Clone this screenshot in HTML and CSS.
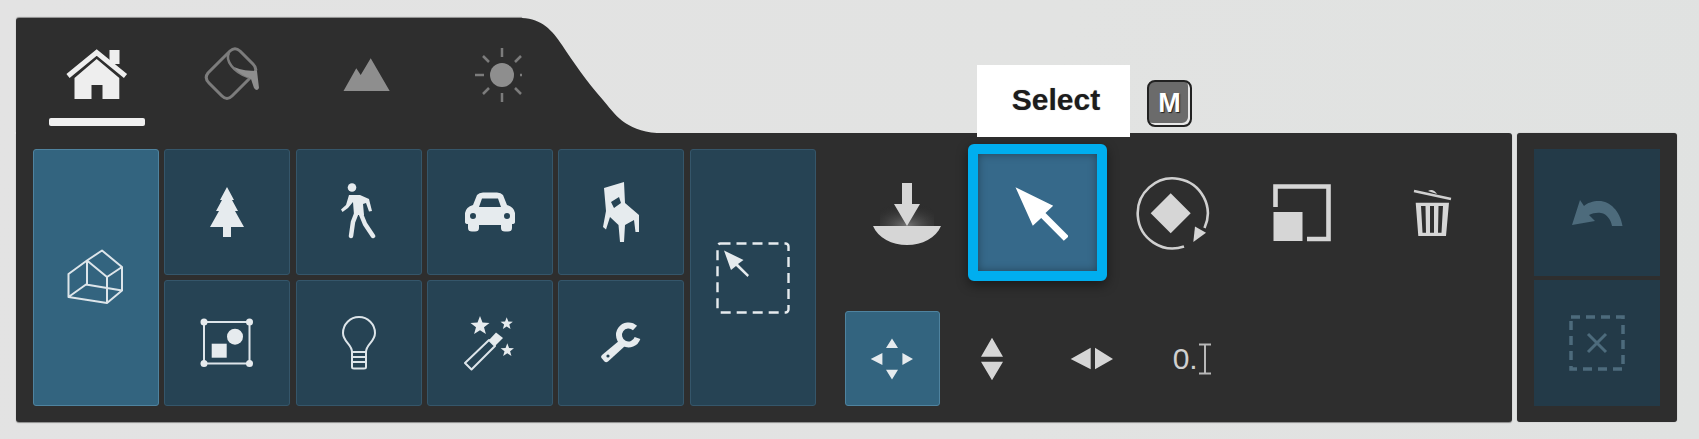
FILE: index.html
```html
<!DOCTYPE html>
<html lang="en">
<head>
    <meta charset="UTF-8">
    <title>Toolbar</title>
    <link rel="stylesheet" href="styles.css">
</head>
<body>
    <div class="toolbar">
        <div class="left-col">
            <!-- mode tabs -->
            <div class="head">
                <div class="tabs">
                    <div class="tab selected">
                        <div class="tab-icon">
                            <svg width="64" height="52" viewBox="0 0 64 52">
                                <path class="tab-on-line" d="M3 27 L31.7 3.5 L60.5 27"/>
                                <rect class="tab-on" x="44.5" y="1" width="10" height="14"/>
                                <path class="tab-on" d="M31.7 10 L54.3 29 V50 H37.5 V36 H26.5 V50 H9.5 V29 Z"/>
                            </svg>
                        </div>
                        <div class="underline"></div>
                    </div>
                    <div class="tab">
                        <div class="tab-icon">
                            <svg width="58" height="58" viewBox="0 0 58 58">
                                <path class="tab-off-line" d="M27 5 Q32 0.5 37 5 L50 18 Q55 23 51 28 L29 50 Q24 55 19 50 L6 37 Q1 32 5 27 Z"/>
                                <path class="tab-off-thin" d="M26 7 C22 14 30 26 45 31"/>
                                <path class="tab-off" d="M31 21 C38 24 46 25 54 25 L56 42 Q54 46 51 42 L48 33 C42 30 35 27 31 21 Z"/>
                            </svg>
                        </div>
                    </div>
                    <div class="tab">
                        <div class="tab-icon">
                            <svg width="48" height="34" viewBox="0 0 48 34">
                                <path class="tab-off" d="M0.5 33 L13.3 10.3 L17.7 17 L27.7 0.3 L46.7 33 Z"/>
                            </svg>
                        </div>
                    </div>
                    <div class="tab">
                        <div class="tab-icon">
                            <svg width="56" height="56" viewBox="0 0 56 56">
                                <circle class="tab-off" cx="28" cy="28" r="12"/>
                                <path class="tab-off-thin" d="M28 1 V10 M28 46 V55 M1 28 H10 M46 28 H55 M9 9 L15 15 M47 9 L41 15 M9 47 L15 41 M47 47 L41 41"/>
                            </svg>
                        </div>
                    </div>
                </div>
                <svg class="curve" width="150" height="115" viewBox="0 0 150 115">
                    <path d="M0 0 C20 1 30 12 40 27 C50 42 65 64 81 82 C92 95 103 113 135 115 H150 V116 H0 Z"/>
                </svg>
            </div>

            <div class="main">
                <!-- object categories -->
                <div class="tile-grid">
                    <div class="tile tall active">
                        <svg width="60" height="60" viewBox="0 0 60 60">
                            <path class="line" d="M36 2.5 L56 19 V42.5 L41 55 L2.5 49 V26 L21 12.5 Z M21 12.5 L41 29 L56 19 M41 29 V55 M21 12.5 V36.5 M2.5 49 L20 36.5 L56 42.5"/>
                        </svg>
                    </div>
                    <div class="tile">
                        <svg width="44" height="52" viewBox="-2 0 44 52">
                            <path class="solid" d="M20 1 L27 14 H25 L31 25 H28 L37 41 H24 V51 H16 V41 H3 L12 25 H9 L15 14 H13 Z"/>
                        </svg>
                    </div>
                    <div class="tile">
                        <svg width="40" height="60" viewBox="0 0 40 60">
                            <circle class="solid" cx="13" cy="5.5" r="4.3"/>
                            <path class="solid" d="M10 13 H21 L30 17 L33 29 L30 29.5 L27 21 L24 22 L25 33 L15 33 L14 20 L9 26 L3.5 30 L2 27.5 L7 23 Z"/>
                            <path class="line-w4" d="M17.5 31 L14 40 L12 54 M21.5 31 L26 42 L34 54"/>
                        </svg>
                    </div>
                    <div class="tile">
                        <svg width="56" height="42" viewBox="-2 0 56 42">
                            <path class="solid" fill-rule="evenodd" d="M13 4 Q15 1.5 19 1.5 H33 Q37 1.5 39 4 L43 14 Q50 16 51 22 V31 Q51 33 48 33 V37 Q48 40.5 44 40.5 H41 Q37 40.5 37 37 V34 H15 V37 Q15 40.5 11 40.5 H8 Q4 40.5 4 37 V33 Q1 33 1 31 V22 Q2 16 9 14 Z M18 7.5 H34 L37 16 H15 Z M9 22 A3 3 0 1 0 9 28 A3 3 0 1 0 9 22 Z M43 22 A3 3 0 1 0 43 28 A3 3 0 1 0 43 22 Z"/>
                        </svg>
                    </div>
                    <div class="tile">
                        <svg width="38" height="62" viewBox="0 0 38 62">
                            <path class="solid" fill-rule="evenodd" d="M2 7 L22 1 L23 22 L37 34 V51 H33.5 L32 39 L23 44 L22 61 H18 L16.5 44 L8 36 L4 48.5 L1 46 L4 30 Z M9 21 L17 16 L19 22 L12 27 Z"/>
                        </svg>
                    </div>
                    <div class="tile tall">
                        <svg width="74" height="72" viewBox="0 0 74 72">
                            <rect class="dashed" x="1.5" y="1.5" width="71" height="69" rx="3"/>
                            <path class="solid" d="M8 8.5 L27.5 18 L22 22 L33 33 L31.5 35 L20 24 L15 28 Z"/>
                        </svg>
                    </div>
                    <div class="tile">
                        <svg width="56" height="52" viewBox="0 0 56 52">
                            <rect class="line" x="5" y="5" width="45.5" height="41.5"/>
                            <circle class="solid" cx="5" cy="5" r="3.5"/>
                            <circle class="solid" cx="50.5" cy="5" r="3.5"/>
                            <circle class="solid" cx="5" cy="46.5" r="3.5"/>
                            <circle class="solid" cx="50.5" cy="46.5" r="3.5"/>
                            <circle class="solid" cx="36" cy="19.7" r="8"/>
                            <rect class="solid" x="12.7" y="26.7" width="15" height="14"/>
                        </svg>
                    </div>
                    <div class="tile">
                        <svg width="36" height="54" viewBox="0 0 36 54">
                            <path class="line" d="M11 36 C11 28 2 26 2 17 A16 16 0 0 1 34 17 C34 26 25 28 25 36 Z M11 36 V51 Q11 52.5 13 52.5 H23 Q25 52.5 25 51 V36 M11 41 H25 M11 46 H25"/>
                        </svg>
                    </div>
                    <div class="tile">
                        <svg width="54" height="56" viewBox="0 0 54 56">
                            <polygon class="solid" transform="translate(17 11) scale(10)" points="0,-1 .25,-.34 .95,-.31 .4,.13 .59,.81 0,.42 -.59,.81 -.4,.13 -.95,-.31 -.25,-.34"/>
                            <polygon class="solid" transform="translate(43.7 8.7) scale(6.5)" points="0,-1 .25,-.34 .95,-.31 .4,.13 .59,.81 0,.42 -.59,.81 -.4,.13 -.95,-.31 -.25,-.34"/>
                            <polygon class="solid" transform="translate(44.3 35.3) scale(7)" points="0,-1 .25,-.34 .95,-.31 .4,.13 .59,.81 0,.42 -.59,.81 -.4,.13 -.95,-.31 -.25,-.34"/>
                            <path class="line" d="M2 48 L26 25 L32 31 L8.5 54.5 Z"/>
                            <path class="solid" d="M26 25 L33 17.5 L40 23 L32 31 Z"/>
                        </svg>
                    </div>
                    <div class="tile">
                        <svg width="44" height="44" viewBox="0 0 44 44">
                            <path class="wrench-head" d="M36 7 A9.5 9.5 0 1 0 38.5 17"/>
                            <path class="solid" d="M21 19 L26 25 L9 40.5 Q7 42 5.5 40.5 L2.5 37 Q1.5 35.5 3 34 Z"/>
                            <circle class="hole" cx="9" cy="35" r="1.6"/>
                        </svg>
                    </div>
                </div>

                <!-- placement tools -->
                <div class="tools">
                    <div class="tool-row">
                        <div class="tool">
                            <svg width="70" height="68" viewBox="0 0 70 68">
                                <defs>
                                    <radialGradient id="dropGlow" cx="0.5" cy="1" r="0.75">
                                        <stop offset="0" stop-color="#777777"/>
                                        <stop offset="1" stop-color="#2e2e2e" stop-opacity="0"/>
                                    </radialGradient>
                                </defs>
                                <rect x="8" y="17" width="54" height="30" fill="url(#dropGlow)"/>
                                <path class="gray" d="M30 4 H40 V25 H48 L35 47 L22 25 H30 Z"/>
                                <path class="gray" d="M1 47 H69 C64 59 50 66 35 66 C20 66 6 59 1 47 Z"/>
                            </svg>
                        </div>
                        <div class="tool tool-select">
                            <svg width="60" height="60" viewBox="-4.5 -1 60 60">
                                <path class="white" d="M3 3.3 L40.7 21.7 L33 29 L56.3 52.3 L51.3 56.7 L28.7 34 L20.3 41.7 Z"/>
                            </svg>
                        </div>
                        <div class="tool">
                            <svg width="82" height="76" viewBox="-5 0 82 76">
                                <path class="gray-line" d="M51 71.5 A35 35 0 1 1 71.5 53"/>
                                <path class="gray" d="M62 51.5 L73 57.7 L60.3 67 Z"/>
                                <path class="gray" d="M37.7 18.3 L57.7 38.3 L37.7 58.3 L17.7 38.3 Z"/>
                            </svg>
                        </div>
                        <div class="tool">
                            <svg width="64" height="60" viewBox="-4 0 64 60">
                                <path class="gray-line-w5" d="M3.5 24 V3.5 H56.5 V56 H35"/>
                                <rect class="gray" x="1.5" y="29" width="29" height="29"/>
                            </svg>
                        </div>
                        <div class="tool">
                            <svg width="45" height="50" viewBox="-5 0 45 50">
                                <path class="gray-line" d="M1 3 L38 11"/>
                                <path class="gray" d="M15 3 Q20 0 24 6 Z"/>
                                <path class="gray" fill-rule="evenodd" d="M2.7 14.7 H36 L33 48 H5.3 Z M8 18 L9.5 44.7 H13 L12.5 18 Z M17 18 V44.7 H21 V18 Z M25.5 18 L25 44.7 H28.5 L30 18 Z"/>
                            </svg>
                        </div>
                    </div>
                    <div class="small-row">
                        <div class="small-tool active">
                            <svg width="44" height="44" viewBox="0 0 44 44">
                                <path class="solid" d="M22 1.4 L28 11 H16 Z M22 42.6 L16 32.7 H28 Z M0.7 22 L12.4 16 V28 Z M43 22 L32.4 16 V28 Z"/>
                            </svg>
                        </div>
                        <div class="small-tool">
                            <svg width="24" height="46" viewBox="0 0 24 46">
                                <path class="gray" d="M12 1.7 L23 20.7 H1 Z M1 25.7 H23 L12 44.3 Z"/>
                            </svg>
                        </div>
                        <div class="small-tool">
                            <svg width="46" height="24" viewBox="0 0 46 24">
                                <path class="gray" d="M1.7 12 L21.7 0.7 V22.3 Z M26 0.7 L44 12 L26 22.3 Z"/>
                            </svg>
                        </div>
                        <div class="small-tool">
                            <span class="num">0.</span>
                            <svg width="14" height="32" viewBox="0 0 14 32">
                                <path class="cursor" d="M1 1.5 H13 M7 1.5 V30.5 M1 30.5 H13"/>
                            </svg>
                        </div>
                    </div>
                </div>
            </div>
        </div>

        <!-- undo / deselect -->
        <div class="side">
            <div class="side-tile">
                <svg width="52" height="28" viewBox="0 0 52 28">
                    <path class="muted" d="M9 1 L1 26 L24 22 L18 16 C22 14 26 13.5 30 14 C36 15 40 21 41 27 H51.5 C49 12 39 2 28 2 C22 2 16 4 13 7 Z"/>
                </svg>
            </div>
            <div class="side-tile">
                <svg width="58" height="58" viewBox="0 0 58 58">
                    <rect class="muted-dash" x="3" y="3" width="52" height="52"/>
                    <path class="muted-x" d="M20 20 L38 38 M38 20 L20 38"/>
                </svg>
            </div>
        </div>

        <!-- tooltip over the panel -->
        <div class="hint">
            <div class="hint-label">Select</div>
            <div class="keycap">M</div>
        </div>
    </div>
</body>
</html>
```

FILE: styles.css
```css
body {
    margin: 0;
    height: 439px;
    overflow: hidden;
    background: linear-gradient(100deg, #e3e3e3, #e2e3e2 60%, #e0e2e1);
    font-family: "Liberation Sans", Arial, sans-serif;
}

.toolbar {
    position: relative;
    display: flex;
    align-items: flex-end;
    gap: 5px;
    width: 1699px;
    padding: 18px 0 0 16px;
    box-sizing: border-box;
}

.toolbar svg {
    filter: blur(0.5px);
}

.left-col {
    width: 1496px;
}

.head {
    display: flex;
    height: 115px;
}

.tabs {
    display: flex;
    flex: none;
    gap: 39px;
    width: 506px;
    padding: 27px 0 0 33px;
    box-sizing: border-box;
    background-color: #2e2e2e;
    border-radius: 3px 0 0 0;
    box-shadow: 0 -1px 1px #8a8a8a;
}

.tab {
    flex: none;
    width: 96px;
}

.tab-icon {
    display: flex;
    justify-content: center;
    align-items: center;
    height: 60px;
}

.underline {
    height: 8px;
    margin-top: 13px;
    background-color: #f0f0f0;
    border-radius: 2px;
}

.curve {
    display: block;
    flex: none;
    fill: #2e2e2e;
}

.main {
    display: flex;
    height: 289px;
    padding: 16px 0 0 17px;
    box-sizing: border-box;
    background-color: #2e2e2e;
    border-radius: 0 3px 3px 3px;
    box-shadow: 0 1px 1px #8a8a8a;
}

.tile-grid {
    display: grid;
    grid-template-columns: repeat(6, 126px);
    grid-template-rows: 126px 126px;
    column-gap: 5.33px;
    row-gap: 5px;
}

.tile {
    display: flex;
    justify-content: center;
    align-items: center;
    background-color: #264354;
    border: 1px solid #35566a;
    border-radius: 3px;
}

.tile.tall {
    grid-row: span 2;
}

.active {
    background-color: #33647f;
    border: 1px solid #4f839f;
    border-radius: 3px;
}

.tools {
    margin: -5px 0 0 25.5px;
}

.tool-row {
    display: grid;
    grid-template-columns: repeat(5, 131px);
    height: 137px;
}

.tool {
    display: flex;
    justify-content: center;
    align-items: center;
}

.tool-select {
    justify-self: center;
    width: 139px;
    box-sizing: border-box;
    background-color: #36698a;
    border: 10px solid #00aeef;
    border-radius: 6px;
    box-shadow: inset 0 0 8px rgba(0, 0, 0, 0.35), 0 4px 12px rgba(0, 0, 0, 0.45);
}

.small-row {
    display: flex;
    gap: 5px;
    margin: 30px 0 0 3.5px;
}

.small-tool {
    display: flex;
    justify-content: center;
    align-items: center;
    width: 95px;
    height: 95px;
    box-sizing: border-box;
}

.num {
    font-size: 30px;
    line-height: 32px;
    color: #d0d0d0;
}

.side {
    display: grid;
    grid-template-rows: 127px 126px;
    row-gap: 4px;
    width: 160px;
    height: 289px;
    padding: 16px 17px;
    box-sizing: border-box;
    background-color: #2e2e2e;
    border-radius: 3px;
    box-shadow: 0 0 1px #8a8a8a;
}

.side-tile {
    display: flex;
    justify-content: center;
    align-items: center;
    background-color: #233a48;
}

/* tooltip */
.hint {
    position: absolute;
    top: 65px;
    left: 977px;
    display: flex;
    align-items: flex-start;
}

.hint-label {
    width: 153px;
    height: 72px;
    padding-left: 5px;
    box-sizing: border-box;
    line-height: 70px;
    text-align: center;
    font-size: 30px;
    font-weight: bold;
    color: #1c1c1c;
    text-shadow: 0 0 1px rgba(0, 0, 0, 0.4);
    background-color: #fff;
}

.keycap {
    display: flex;
    justify-content: center;
    align-items: center;
    width: 45px;
    height: 47px;
    margin: 15px 0 0 17px;
    box-sizing: border-box;
    font-size: 27px;
    font-weight: bold;
    color: #fff;
    text-shadow: 1px 1px 1px #222;
    background-color: #6b6b6b;
    border: 2px solid #222;
    border-radius: 8px;
    box-shadow: inset -2px -2px 0 #e8e8e8;
}

/* svg paints */
.tab-on { fill: #eeeeee; }
.tab-on-line { fill: none; stroke: #eeeeee; stroke-width: 5; }
.tab-off { fill: #8e8e8e; }
.tab-off-line { fill: none; stroke: #7c7c7c; stroke-width: 3; }
.tab-off-thin { fill: none; stroke: #7c7c7c; stroke-width: 2.5; }

.solid { fill: #e6ebee; }
.hole { fill: #264354; }
.line { fill: none; stroke: #dde5ea; stroke-width: 2; stroke-linejoin: round; }
.line-w4 { fill: none; stroke: #e6ebee; stroke-width: 4.5; stroke-linecap: round; stroke-linejoin: round; }
.dashed { fill: none; stroke: #e6ebee; stroke-width: 2.4; stroke-dasharray: 10 6; }
.wrench-head { fill: none; stroke: #e6ebee; stroke-width: 6; }

.white { fill: #ffffff; }
.gray { fill: #d6d6d6; }
.gray-line { fill: none; stroke: #d0d0d0; stroke-width: 2.6; }
.gray-line-w5 { fill: none; stroke: #d6d6d6; stroke-width: 4.6; }
.cursor { fill: none; stroke: #b8b8b8; stroke-width: 2; }

.muted { fill: #4d6b7c; }
.muted-dash { fill: none; stroke: #4d6b7c; stroke-width: 3.5; stroke-dasharray: 9 6; }
.muted-x { fill: none; stroke: #4d6b7c; stroke-width: 3; }
```
